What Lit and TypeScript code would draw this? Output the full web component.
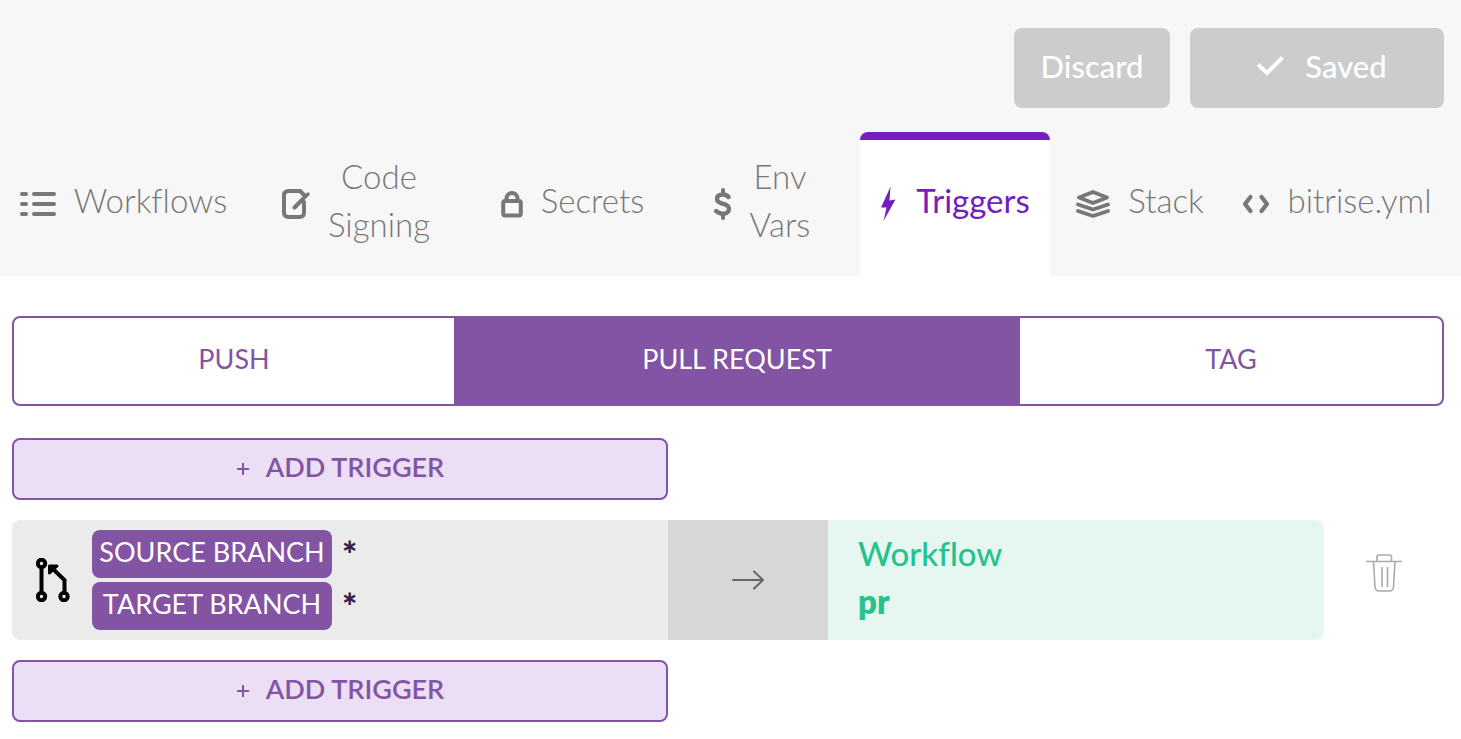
import { LitElement, html, css, svg } from "lit";
import { customElement, state } from "lit/decorators.js";
import { classMap } from "lit/directives/class-map.js";

const icons = {
  list: svg`<svg width="36" height="26" viewBox="0 0 36 26" fill="none" stroke="currentColor" stroke-width="4" stroke-linecap="round" aria-hidden="true"><path d="M2 3h4M14 3h20M2 13h4M14 13h20M2 23h4M14 23h20"/></svg>`,
  edit: svg`<svg width="28" height="32" viewBox="0 0 28 32" fill="none" stroke="currentColor" stroke-width="4" stroke-linecap="round" aria-hidden="true"><path d="M18 3H6.500Q2 3 2 7.500V24.500Q2 29 6.500 29H17.500Q22 29 22 24.500V14"/><path d="M18 3L22 7"/><path d="M12.500 19.500L21 11"/><path stroke-width="3.400" d="M20 12L26 6"/></svg>`,
  lock: svg`<svg width="22" height="28" viewBox="0 0 22 28" fill="none" stroke="currentColor" stroke-width="4" aria-hidden="true"><rect x="2.200" y="11" width="17.600" height="14.500" rx="2"/><path d="M5.500 11V8.500a5.500 5.500 0 0 1 11 0V11"/></svg>`,
  dollar: svg`<svg width="18" height="34" viewBox="0 0 18 34" fill="none" stroke="currentColor" stroke-width="4.400" stroke-linecap="round" aria-hidden="true"><path stroke-width="4" d="M9 3v4M9 27v4"/><path d="M14.500 10C13 8.200 11.500 7.500 9 7.500c-4 0-6 1.500-6 4.500 0 3.200 2.500 4 6 4.800s6 1.700 6 5-2.700 5-6 5c-3 0-5-1-6.800-2.800"/></svg>`,
  bolt: svg`<svg width="18" height="36" viewBox="0 0 18 36" fill="currentColor" aria-hidden="true"><path d="M11.500 .8L2 21.500H7.500L4.500 35L16.500 13.500L10.500 14.500Z" transform="translate(-1 0)"/></svg>`,
  stack: svg`<svg width="34" height="28" viewBox="0 0 34 28" fill="none" stroke="currentColor" stroke-width="3.800" stroke-linejoin="round" stroke-linecap="round" aria-hidden="true"><path d="M17 2L31 7.500L17 13L3 7.500Z"/><path d="M2 14.500L17 19.500L32 14.500M2 21L17 26L32 21"/></svg>`,
  code: svg`<svg width="28" height="20" viewBox="0 0 28 20" fill="none" stroke="currentColor" stroke-width="4.200" stroke-linecap="round" stroke-linejoin="round" aria-hidden="true"><path d="M8.500 3L3 10L8.500 17M19.500 3L25 10L19.500 17"/></svg>`,
};

type Tab = { id: string; label: string; icon: keyof typeof icons };

const tabs: Tab[] = [
  { id: "workflows", label: "Workflows", icon: "list" },
  { id: "signing", label: "Code Signing", icon: "edit" },
  { id: "secrets", label: "Secrets", icon: "lock" },
  { id: "env", label: "Env Vars", icon: "dollar" },
  { id: "triggers", label: "Triggers", icon: "bolt" },
  { id: "stack", label: "Stack", icon: "stack" },
  { id: "yml", label: "bitrise.yml", icon: "code" },
];

const kinds = ["PUSH", "PULL REQUEST", "TAG"];

@customElement("app-root")
export class AppRoot extends LitElement {
  @state() private tab = "triggers";
  @state() private kind = "PULL REQUEST";

  static styles = css`
    :host {
      display: block;
      font-family: Lato, sans-serif;
      font-size: 33px;
      line-height: 48px;
      font-variant-ligatures: none;
      color: #777;
      background: #fff;
    }
    * { box-sizing: border-box; }
    svg { flex: none; display: block; }
    button { font: inherit; font-variant-ligatures: none; color: inherit; margin: 0; padding: 0; border: 0; background: none; cursor: pointer; }
    .header { background: #f7f7f7; padding-top: 28px; }
    .actions { display: flex; justify-content: flex-end; gap: 20px; padding-right: 17px; margin-bottom: 24px; }
    .action {
      display: flex; align-items: center; justify-content: center; gap: 20px;
      height: 80px; padding-bottom: 4px; border-radius: 8px;
      background: #ccc; color: #fff; font-size: 31px; font-weight: 500;
    }
    .discard { width: 156px; }
    .save { width: 254px; padding-left: 8px; }
    .tabs {
      display: grid; padding-right: 18px;
      grid-template-columns:
        minmax(0, 247fr) minmax(0, 226fr) minmax(0, 199fr) minmax(0, 188fr)
        minmax(0, 190fr) minmax(0, 180fr) minmax(0, 213fr);
    }
    .tab {
      display: flex; align-items: center; justify-content: center; gap: 18px;
      min-height: 144px; border-top: 8px solid transparent; padding-bottom: 16px;
      border-radius: 8px 8px 0 0; color: #777; text-decoration: none; text-align: center;
      font-weight: 300;
    }
    .tab svg { margin-top: 8px; }
    .two-line { padding-right: 8px; }
    .two-line span { width: min-content; }
    .tab.active { background: #fff; border-top-color: #7420be; color: #7420be; font-weight: 400; }
    .content { padding: 40px 17px 17px 12px; }
    .kinds {
      display: grid; grid-template-columns: 440fr 566fr 422fr; height: 90px; overflow: hidden;
      border: 2px solid #8354a4; border-radius: 8px; margin-bottom: 32px;
    }
    .kind { font-size: 27px; color: #8354a4; padding-bottom: 4px; }
    .kind.active { background: #8354a4; color: #fff; }
    .trigger-list { display: grid; grid-template-columns: 1fr 1fr 120px; gap: 20px 0; align-items: center; }
    .add {
      grid-column: 1; height: 62px; display: flex; align-items: center; justify-content: center; gap: 16px;
      border: 2px solid #8354a4; border-radius: 8px; background: #ebdef5; color: #8354a4;
      font-size: 27px; font-weight: 600; padding-bottom: 4px;
    }
    .add svg { margin-top: 3px; }
    .rule { grid-column: 1 / 3; display: grid; grid-template-columns: 50% 160px 1fr; min-height: 120px; border-radius: 8px; overflow: hidden; }
    .from { display: flex; align-items: center; background: #ebebeb; gap: 22px; padding-left: 24px; }
    .branches { display: grid; grid-template-columns: 240px auto; gap: 4px 10px; margin: 0; color: #351d48; }
    .name { background: #8354a4; color: #fff; font-size: 27px; line-height: 43px; height: 48px; border-radius: 8px; text-align: center; white-space: nowrap; }
    .value { margin: 0; font-size: 36px; font-weight: 900; line-height: 48px; }
    .arrow { display: flex; align-items: center; justify-content: center; background: #d7d7d7; color: #666; }
    .to { background: #e6f7f1; color: #26c28c; padding: 9px 30px; font-weight: 500; }
    .target { font-weight: 800; }
    .remove { grid-column: 3; justify-self: center; color: #aaa; margin-bottom: 14px; }
  `;

  private addButton() {
    return html`<button class="add" type="button">
      <svg width="14" height="12" viewBox="0 0 14 12" stroke="currentColor" stroke-width="2" aria-hidden="true"><path d="M1 6h12M7 0v12"/></svg>
      <span>ADD TRIGGER</span>
    </button>`;
  }

  render() {
    return html`
      <header class="header">
        <div class="actions">
          <button class="action discard" type="button">Discard</button>
          <button class="action save" type="button">
            <svg width="30" height="20" viewBox="0 0 30 20" fill="none" stroke="currentColor" stroke-width="4" aria-hidden="true"><path d="M3 8.500L12 17L27.500 1.500"/></svg>
            <span>Saved</span>
          </button>
        </div>
        <nav class="tabs">
          ${tabs.map((t) => html`<a
            href="#${t.id}"
            class=${classMap({ tab: true, active: this.tab === t.id, "two-line": t.label.includes(" ") })}
            @click=${() => (this.tab = t.id)}
          >${icons[t.icon]}<span>${t.label}</span></a>`)}
        </nav>
      </header>
      <main class="content">
        <div class="kinds">
          ${kinds.map((k) => html`<button
            type="button"
            class=${classMap({ kind: true, active: this.kind === k })}
            @click=${() => (this.kind = k)}
          >${k}</button>`)}
        </div>
        <div class="trigger-list">
          ${this.addButton()}
          <div class="rule">
            <div class="from">
              <svg width="34" height="44" viewBox="0 0 34 44" fill="none" stroke="#000" stroke-width="4" aria-hidden="true">
                <circle cx="5.500" cy="5.500" r="3.700"/><circle cx="5.500" cy="38.500" r="3.700"/><circle cx="28" cy="38.500" r="3.700"/>
                <path d="M5.500 9v26M28.500 35V22L17 11"/>
                <path d="M13.500 15V8H21Z" fill="#000" stroke-width="3" stroke-linejoin="round"/>
              </svg>
              <dl class="branches">
                <dt class="name">SOURCE BRANCH</dt><dd class="value">*</dd>
                <dt class="name">TARGET BRANCH</dt><dd class="value">*</dd>
              </dl>
            </div>
            <div class="arrow">
              <svg width="32" height="20" viewBox="0 0 32 20" fill="none" stroke="currentColor" stroke-width="2" stroke-linecap="round" stroke-linejoin="round" aria-hidden="true"><path d="M1 10H31M22 1.500L31 10L22 18.500"/></svg>
            </div>
            <div class="to">
              <div>Workflow</div>
              <div class="target">pr</div>
            </div>
          </div>
          <button class="remove" type="button" aria-label="Delete trigger">
            <svg width="36" height="38" viewBox="0 0 36 38" fill="none" stroke="currentColor" stroke-width="1.600" aria-hidden="true"><path d="M0 7.500H36M11 7.500V3Q11 1 13 1H23.500Q25.500 1 25.500 3V7.500M7.500 7.500L9 33Q9.500 37 13 37H23.500Q27 37 27.500 33L29 7.500M16 13V33M21.500 13V33"/></svg>
          </button>
          ${this.addButton()}
        </div>
      </main>
    `;
  }
}
